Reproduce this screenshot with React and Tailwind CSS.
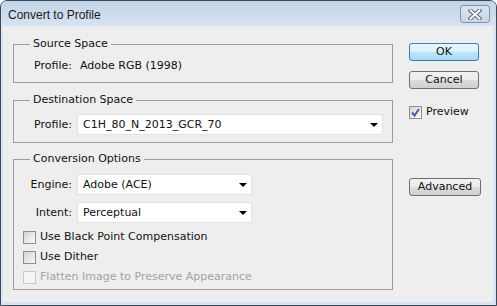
import React from 'react'

function Checkbox({ checked, disabled }) {
  return (
    <span
      className={`w-[13px] h-[13px] shrink-0 border flex items-center justify-center ${
        disabled ? 'border-[#c9c9c9] bg-[#f4f4f4]' : 'border-[#8e8f8f] bg-gradient-to-br from-[#d2d2d2] to-[#fbfbfb]'
      }`}>
      {checked && (
        <svg width="11" height="11" viewBox="0 0 11 11">
          <path d="M2 5.5 L4.5 8.5 L9 2" fill="none" stroke="#4a5fa3" strokeWidth="2" />
        </svg>
      )}
    </span>
  )
}

function Select({ value, width }) {
  return (
    <div className={`${width} h-[21px] bg-white border border-[#e1e1e1] flex items-center justify-between pl-[5px] pr-[4px]`}>
      <span className="leading-[14px]">{value}</span>
      <svg width="8" height="4" viewBox="0 0 8 4">
        <polygon points="0,0 8,0 4,4" fill="#000" />
      </svg>
    </div>
  )
}

function Button({ children, primary, width }) {
  return (
    <button
      className={`${width} h-[18px] rounded-[3px] border flex items-center justify-center leading-[14px] ${
        primary
          ? 'border-[#3c7fb1] bg-[linear-gradient(#eaf6fd,#d9f0fc_50%,#bee6fd_50%,#a7d9f5)]'
          : 'border-[#707070] bg-[linear-gradient(#f2f2f2,#ebebeb_50%,#dddddd_50%,#cfcfcf)]'
      }`}>
      {children}
    </button>
  )
}

function Group({ title, height, children }) {
  return (
    <fieldset className={`w-[380px] ${height} border border-[#9c9c9c]`}>
      <legend className="ml-[16px] px-[3px] leading-[14px]">{title}</legend>
      {children}
    </fieldset>
  )
}

const CHECKS = [
  { label: 'Use Black Point Compensation' },
  { label: 'Use Dither' },
  { label: 'Flatten Image to Preserve Appearance', disabled: true },
]

export default function App() {
  return (
    <div className="w-[497px] h-[306px] bg-white font-['DejaVu_Sans',Tahoma,sans-serif] text-[11px] text-[#111]">
      <div className="w-full h-full flex flex-col border border-[#3d4756] rounded-t-[7px] bg-[#d8e4f2] overflow-hidden">
        {/* title bar */}
        <div className="h-[25px] shrink-0 flex items-start justify-between pl-[7px] pr-[6px] bg-gradient-to-b from-[#c3d4e8] to-[#d6e3f1]">
          <span className="mt-[7px] leading-[14px] text-[12px] text-[#1b1b1b] font-['Liberation_Sans',Arial,sans-serif]">Convert to Profile</span>
          <button className="mt-[4px] w-[30px] h-[18px] rounded-[3px] border border-[#8494ae] bg-gradient-to-b from-[#dbe5f1] to-[#c9d6e6] flex items-center justify-center">
            <svg width="14" height="11" viewBox="0 0 14 11">
              <path d="M2.5 1.5 L11.5 9.5 M11.5 1.5 L2.5 9.5" stroke="#5d6678" strokeWidth="4" strokeLinecap="square" />
              <path d="M2.5 1.5 L11.5 9.5 M11.5 1.5 L2.5 9.5" stroke="#ffffff" strokeWidth="2" strokeLinecap="square" />
            </svg>
          </button>
        </div>

        {/* client area */}
        <div className="flex-1 ml-[2px] mr-[3px] mb-[3px] bg-[#eeeeee] flex items-start">
          <div className="pl-[10px] pt-[11px] flex flex-col">
            <Group title="Source Space" height="h-[46px]">
              <div className="flex items-center mt-[8px] leading-[14px]">
                <span className="w-[58px] text-right">Profile:</span>
                <span className="ml-[8px]">Adobe RGB (1998)</span>
              </div>
            </Group>

            <div className="mt-[10px]">
              <Group title="Destination Space" height="h-[50px]">
                <div className="flex items-center mt-[7px]">
                  <span className="w-[58px] text-right leading-[14px]">Profile:</span>
                  <div className="ml-[5px]">
                    <Select value="C1H_80_N_2013_GCR_70" width="w-[306px]" />
                  </div>
                </div>
              </Group>
            </div>

            <div className="mt-[9px]">
              <Group title="Conversion Options" height="h-[138px]">
                <div className="flex items-center mt-[8px]">
                  <span className="w-[58px] text-right leading-[14px]">Engine:</span>
                  <div className="ml-[5px]">
                    <Select value="Adobe (ACE)" width="w-[175px]" />
                  </div>
                </div>
                <div className="flex items-center mt-[7px]">
                  <span className="w-[58px] text-right leading-[14px]">Intent:</span>
                  <div className="ml-[5px]">
                    <Select value="Perceptual" width="w-[175px]" />
                  </div>
                </div>
                <div className="mt-[4px] pl-[9px]">
                  {CHECKS.map(c => (
                    <div key={c.label} className="h-[20px] flex items-center gap-[4px]">
                      <Checkbox disabled={c.disabled} />
                      <span className={`leading-[14px] ${c.disabled ? 'text-[#a3a3a3]' : ''}`}>{c.label}</span>
                    </div>
                  ))}
                </div>
              </Group>
            </div>
          </div>

          <div className="ml-[16px] pt-[17px] flex flex-col items-start">
            <Button primary width="w-[70px]">OK</Button>
            <div className="mt-[10px]">
              <Button width="w-[70px]">Cancel</Button>
            </div>
            <div className="mt-[16px] flex items-center gap-[4px]">
              <Checkbox checked />
              <span className="leading-[14px]">Preview</span>
            </div>
            <div className="mt-[59px]">
              <Button width="w-[72px]">Advanced</Button>
            </div>
          </div>
        </div>
      </div>
    </div>
  )
}
